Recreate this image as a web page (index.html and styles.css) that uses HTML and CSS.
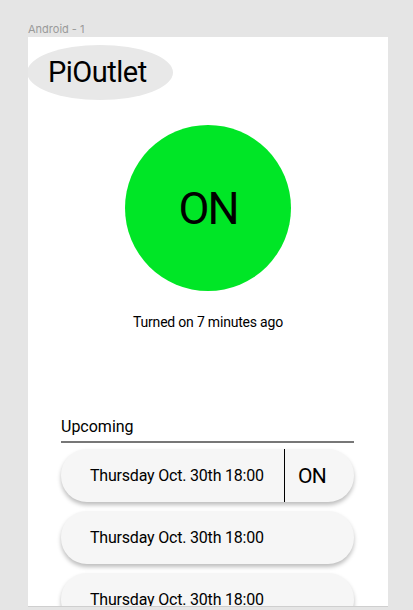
FILE: index.html
```html
<!DOCTYPE html>
<html>
<head>
<meta charset="utf-8">
<link rel="stylesheet" href="styles.css">
</head>
<body>
<div class="canvas">
  <div class="frame-label">Android - 1</div>
  <div class="frame">
    <div class="brand"><span>PiOutlet</span></div>
    <div class="status">
      <div class="power">ON</div>
      <div class="since">Turned on 7 minutes ago</div>
    </div>
    <div class="upcoming">
      <div class="upcoming-title">Upcoming</div>
      <div class="card">
        <div class="card-date">Thursday Oct. 30th 18:00</div>
        <div class="card-state">ON</div>
      </div>
      <div class="card">
        <div class="card-date">Thursday Oct. 30th 18:00</div>
      </div>
      <div class="card">
        <div class="card-date">Thursday Oct. 30th 18:00</div>
      </div>
    </div>
  </div>
</div>
</body>
</html>
```
FILE: styles.css
```css
html, body {
  margin: 0;
  padding: 0;
  background: #e5e5e5;
}
body {
  font-family: Roboto, "Liberation Sans", sans-serif;
  color: #000;
}
.canvas {
  padding-left: 28px;
  padding-top: 22px;
  height: 588px;
  overflow: hidden;
}
.frame-label {
  font-family: Inter, Roboto, sans-serif;
  font-size: 11px;
  line-height: 14px;
  color: #9a9a9a;
  height: 15px;
}
.frame {
  width: 360px;
  height: 569px;
  background: #fff;
  overflow: hidden;
  border-bottom: 1px solid #cfcfcf;
}
.brand {
  margin-top: 8px;
  margin-left: -1px;
  width: 146px;
  height: 55px;
  border-radius: 50%;
  background: #e8e8e8;
  display: flex;
  align-items: center;
}
.brand span {
  padding-left: 21px;
  font-size: 29px;
  letter-spacing: -0.5px;
  padding-bottom: 2px;
}
.status {
  display: flex;
  flex-direction: column;
  align-items: center;
  margin-top: 25px;
}
.power {
  width: 166px;
  height: 166px;
  border-radius: 50%;
  background: #00e626;
  display: flex;
  align-items: center;
  justify-content: center;
  font-size: 45px;
  letter-spacing: -2px;
}
.since {
  margin-top: 22px;
  font-size: 14px;
  line-height: 18px;
  letter-spacing: -0.2px;
}
.upcoming {
  margin: 86px 34px 0 33px;
}
.upcoming-title {
  font-size: 16px;
  line-height: 20px;
  padding-bottom: 4px;
  border-bottom: 2px solid #777;
  margin-bottom: 6px;
}
.card {
  height: 53px;
  border-radius: 26px;
  background: #f6f6f6;
  box-shadow: 0 3px 4px rgba(0, 0, 0, 0.26);
  display: flex;
  align-items: center;
  margin-bottom: 9px;
}
.card-date {
  flex: 1;
  padding-left: 29px;
  font-size: 16px;
  letter-spacing: -0.2px;
}
.card-state {
  width: 70px;
  align-self: stretch;
  border-left: 1px solid #000;
  display: flex;
  align-items: center;
  padding-left: 13px;
  box-sizing: border-box;
  font-size: 21px;
  letter-spacing: -0.8px;
}
```
